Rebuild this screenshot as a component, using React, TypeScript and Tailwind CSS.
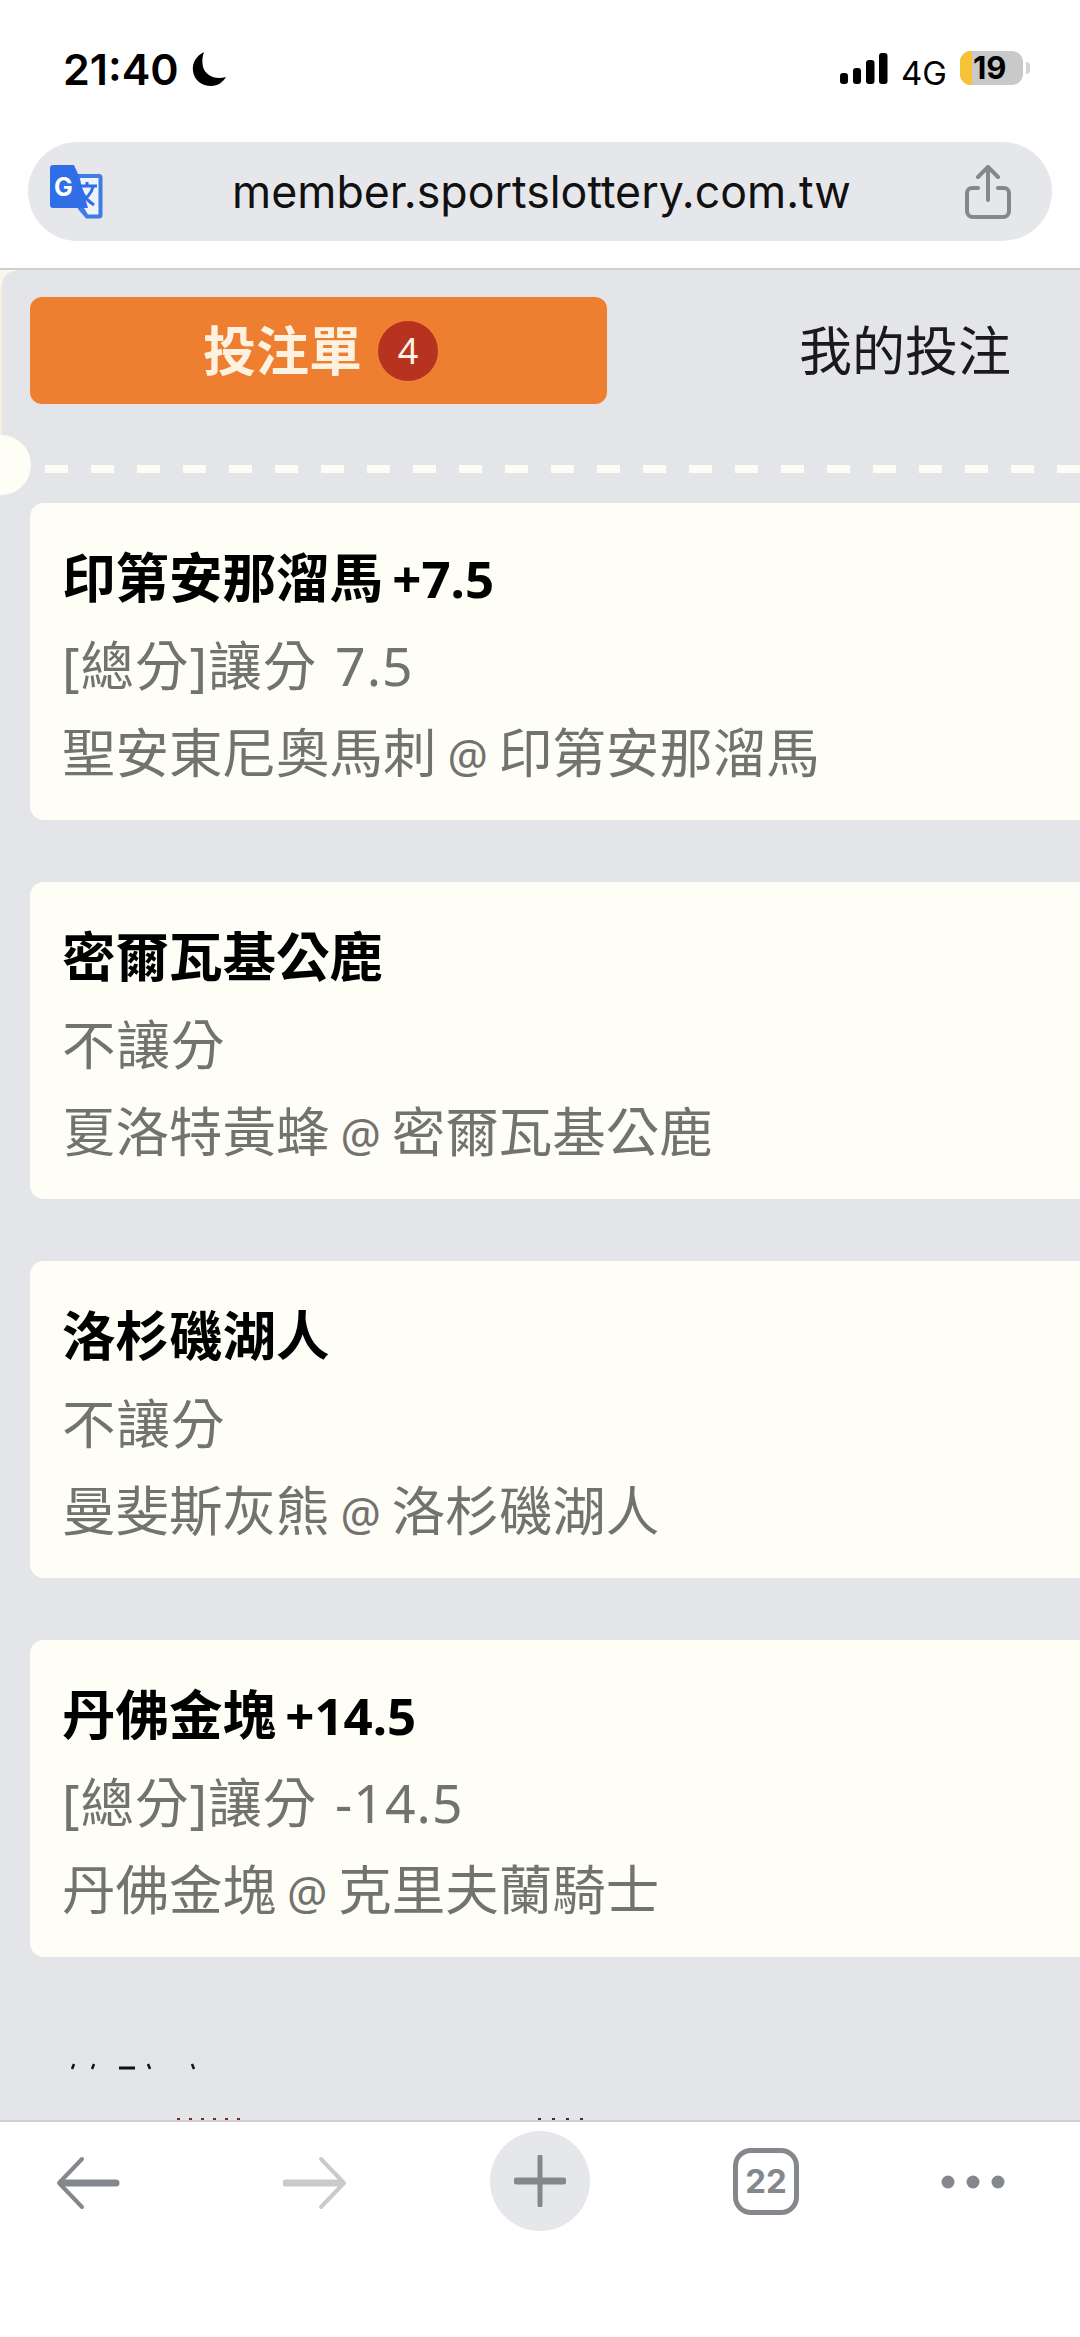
const cards = [
  { t: "印第安那溜馬", x: " +7.5", s: "[總分]讓分 7.5", a: "聖安東尼奧馬刺", b: "印第安那溜馬" },
  { t: "密爾瓦基公鹿", x: "", s: "不讓分", a: "夏洛特黃蜂", b: "密爾瓦基公鹿" },
  { t: "洛杉磯湖人", x: "", s: "不讓分", a: "曼斐斯灰熊", b: "洛杉磯湖人" },
  { t: "丹佛金塊", x: " +14.5", s: "[總分]讓分 -14.5", a: "丹佛金塊", b: "克里夫蘭騎士" },
];
const cjk = "font-['Noto_Sans','Noto_Sans_CJK_TC',sans-serif]";
const dashes = Array.from({ length: 23 });

export default function App() {
  return (
    <div className={`w-[1080px] h-[2337px] bg-white flex flex-col overflow-hidden ${cjk}`}>
      <div className="h-[142px] shrink-0 flex justify-between pl-[63px] pr-[50px] pt-[45px] font-['Inter',sans-serif]">
        <div className="flex items-start gap-[12px]">
          <span className="text-[43px] leading-[48px] font-semibold text-black">21:40</span>
          <svg width="36" height="36" viewBox="0 0 36 36" className="mt-[6px]"><path d="M13 1 C5 5 1 12 2 20 C3 29 11 35 20 35 C27 35 32 31 35 26 C24 29 15 25 12 16 C11 11 11 6 13 1Z" fill="#000" /></svg>
        </div>
        <div className="flex items-start">
          <svg width="48" height="31" viewBox="0 0 48 31" className="mt-[8px]">
            <rect x="0" y="20" width="8" height="11" rx="3" /><rect x="13" y="15" width="8" height="16" rx="3" /><rect x="26" y="7" width="8.5" height="24" rx="3" /><rect x="39" y="0" width="8.5" height="31" rx="3" />
          </svg>
          <span className="ml-[13px] mt-[8px] text-[33px] leading-[40px] text-black">4G</span>
          <div className="ml-[13px] mt-[6px] w-[63px] h-[34px] rounded-[11px] bg-[#c9c9c9] flex relative">
            <div className="w-[12px] rounded-l-[11px] bg-[#f5c335]" />
            <span className="absolute left-[13px] top-[-3px] text-[31px] leading-[40px] font-bold text-black">19</span>
          </div>
          <div className="ml-[3px] mt-[17px] w-[4px] h-[12px] rounded-r bg-[#d4d4d4]" />
        </div>
      </div>
      <div className="h-[99px] mx-[28px] shrink-0 rounded-[50px] bg-[#e6e7eb] flex items-center justify-between pl-[22px] pr-[41px]">
        <svg width="53" height="54" viewBox="0 0 53 54">
          <path d="M27 9 H49 a3.5 3.5 0 0 1 3.5 3.5 V50 a3.5 3.5 0 0 1 -3.5 3.5 H36 L28 44Z" fill="#3f7be3" />
          <path d="M30 13 H48.5 V49.5 H38 L34 43 Z" fill="#edf2fb" />
          <path d="M3 0 H24 L28 9 L38 43 H3 a3 3 0 0 1 -3 -3 V3 a3 3 0 0 1 3 -3Z" fill="#2f6ee6" />
          <text x="4" y="31" fontSize="25" fontWeight="700" fill="#fff" fontFamily="Inter">G</text>
          <path d="M28 21 H47 M37 17 V21 M43 22 C41 30 36 34 29 37 M31 24 C33 31 38 36 44 40" stroke="#2f6ee6" strokeWidth="3" fill="none" />
        </svg>
        <span className="ml-[15px] text-[44.7px] leading-[60px] text-[#111] font-['Inter',sans-serif]">member.sportslottery.com.tw</span>
        <svg width="46" height="54" viewBox="0 0 46 54" fill="none" stroke="#84878b" strokeWidth="4" strokeLinecap="round" strokeLinejoin="round">
          <path d="M13 23 H7 a5 5 0 0 0 -5 5 V46 a6 6 0 0 0 6 6 H38 a6 6 0 0 0 6 -6 V28 a5 5 0 0 0 -5 -5 H33" />
          <path d="M23 35 V2 M13 12 L23 2 L33 12" />
        </svg>
      </div>
      <div className="h-[27px] shrink-0 bg-white" />
      <main className="relative flex-1 min-h-0 overflow-hidden bg-[#e4e5e8] border-t-2 border-[#cfcfcf]">
        <div className="absolute left-0 top-0 w-[2px] h-[183px] bg-[#f5eee0]" />
        <div className="absolute left-0 top-0 w-[16px] h-[16px] bg-[#fbf6ea]">
          <div className="ml-[2px] mt-[1px] w-[14px] h-[15px] rounded-tl-[14px] bg-[#e4e5e8]" />
        </div>
        <div className="absolute left-[-30px] top-[165px] w-[61px] h-[60px] rounded-full bg-[#fefef6]" />
        <div className="flex items-center pl-[30px] pt-[27px]">
          <div className="w-[577px] h-[107px] rounded-[12px] bg-[#ee7f31] flex items-center justify-center gap-[16px] pl-[4px]">
            <span className="text-[53px] leading-[70px] font-bold text-[#fdf2e2]">投注單</span>
            <span className="w-[60px] h-[60px] rounded-full bg-[#b83220] text-[#fdf2e2] text-[36px] flex items-center justify-center">4</span>
          </div>
          <span className="ml-[192px] text-[53px] leading-[70px] text-[#1a1a1a]">我的投注</span>
        </div>
        <div className="flex gap-[23px] pl-[45px] mt-[61px]">
          {dashes.map((_, i) => (
            <div key={i} className="w-[23px] h-[8px] shrink-0 bg-[#fdfcf4]" />
          ))}
        </div>
        <div className="flex flex-col gap-[62px] pl-[30px] mt-[30px]">
          {cards.map((c) => (
            <div key={c.t} className="w-[1100px] h-[317px] rounded-[14px] bg-[#fefef6] pl-[32px] pt-[31px]">
              <div className="text-[53.5px] leading-[87px] font-bold text-black">
                {c.t}
                <span className="text-[51px] [word-spacing:-4px]">{c.x}</span>
              </div>
              <div className="text-[53.5px] leading-[87px] text-[#72726e] tracking-[1px] [word-spacing:3px]">{c.s}</div>
              <div className="text-[53.5px] leading-[87px] text-[#72726e] [word-spacing:-3px]">
                {c.a} <span className="text-[45px]">@</span> {c.b}
              </div>
            </div>
          ))}
        </div>
        <svg width="600" height="60" viewBox="0 0 600 60" className="absolute left-0 bottom-0" stroke="#111" fill="none">
          <g strokeWidth="2.5">
            <path d="M74 4 L72 9 M94 4 L92 9 M148 4 L150 9 M192 4 L194 9" />
            <path d="M119 8 H135" strokeWidth="3" />
          </g>
          <path d="M177 59 H243" stroke="#7a2a2a" strokeWidth="2" strokeDasharray="3 9" />
          <path d="M538 59 H592" stroke="#333" strokeWidth="2" strokeDasharray="3 11" />
        </svg>
      </main>
      <div className="h-[217px] shrink-0 bg-white border-t-2 border-[#cfcfcf] flex items-start pl-[56px] pt-[9px]">
        <svg width="64" height="54" viewBox="0 0 64 54" className="mt-[25px]" fill="none" stroke="#84878b" strokeLinecap="round" strokeLinejoin="round">
          <path d="M26 3 L3 27 L26 51" strokeWidth="4" /><path d="M6 27 H60" strokeWidth="7" />
        </svg>
        <svg width="64" height="54" viewBox="0 0 64 54" className="mt-[25px] ml-[163px]" fill="none" stroke="#c9cacc" strokeLinecap="round" strokeLinejoin="round">
          <path d="M38 3 L61 27 L38 51" strokeWidth="4" /><path d="M3 27 H58" strokeWidth="7" />
        </svg>
        <div className="ml-[143px] w-[100px] h-[100px] rounded-full bg-[#e6e7eb] flex items-center justify-center">
          <svg width="52" height="52" viewBox="0 0 52 52" stroke="#84878b" strokeLinecap="round"><path d="M26 2 V50" strokeWidth="5" /><path d="M3 26 H49" strokeWidth="7" /></svg>
        </div>
        <div className="ml-[143px] mt-[17px] w-[66px] h-[67px] rounded-[18px] border-[5px] border-[#84878b] flex items-center justify-center text-[33px] font-bold text-[#84878b] font-['Inter',sans-serif]">22</div>
        <svg width="64" height="16" viewBox="0 0 64 16" className="ml-[142px] mt-[43px]" fill="#84878b"><circle cx="7" cy="8" r="6.5" /><circle cx="32" cy="8" r="6.5" /><circle cx="57" cy="8" r="6.5" /></svg>
      </div>
    </div>
  );
}
